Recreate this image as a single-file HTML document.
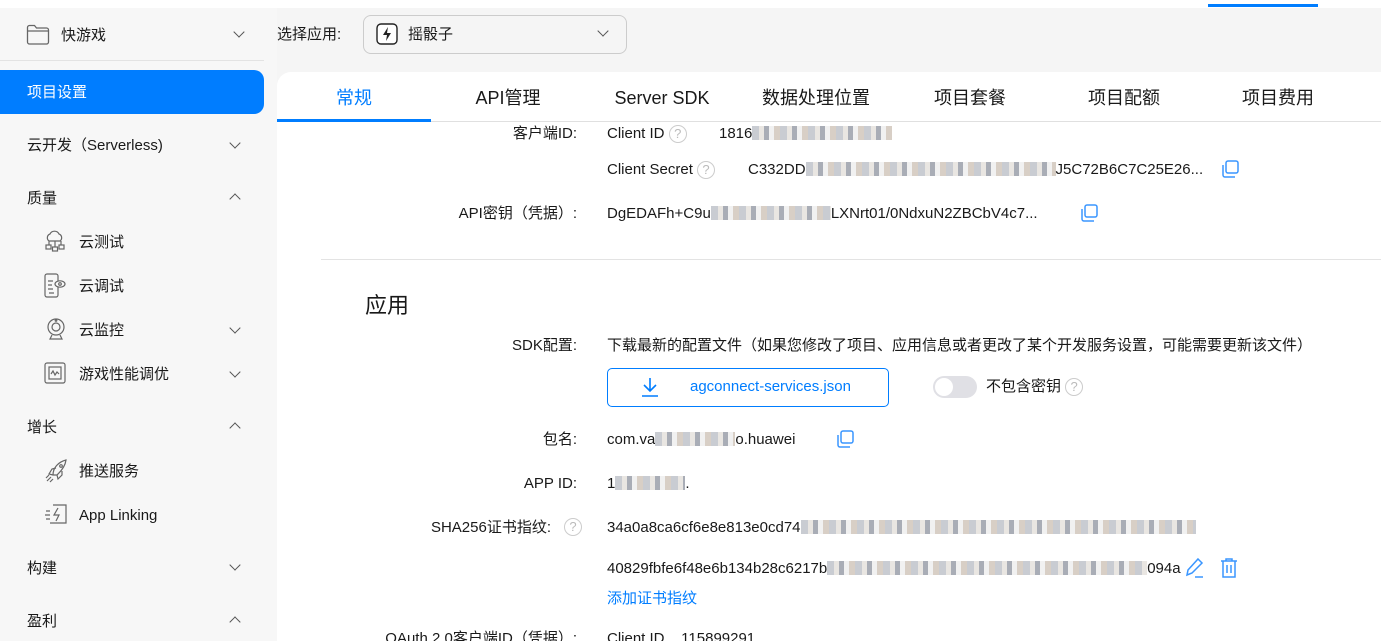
<!DOCTYPE html>
<html><head><meta charset="utf-8"><style>
*{margin:0;padding:0;box-sizing:border-box}
html,body{width:1381px;height:641px;overflow:hidden}
body{background:#f5f5f5;font-family:"Liberation Sans","Noto Sans CJK SC",sans-serif;color:#191919;position:relative;line-height:20px}
.a{position:absolute;white-space:nowrap}
.side{position:absolute;left:0;top:8px;width:277px;height:633px;background:#f7f7f7}
.si{font-size:15px;color:#191919}
.chev{position:absolute;width:8px;height:8px;border-right:1.3px solid #555;border-bottom:1.3px solid #555;transform:rotate(45deg)}
.up{transform:rotate(225deg)}
.card{position:absolute;left:277px;top:72px;width:1104px;height:569px;background:#fff;border-radius:14px 0 0 0}
.tab{position:absolute;top:87px;font-size:18px;line-height:22px;color:#191919;width:154px;text-align:center}
.lbl{position:absolute;font-size:15px;text-align:right;right:804px;white-space:nowrap}
.val{position:absolute;font-size:15px;white-space:nowrap;left:607px}
.q{display:inline-block;width:18px;height:18px;border:1.3px solid #ccc;border-radius:50%;color:#bbb;font-size:13px;text-align:center;line-height:16px;vertical-align:top;margin-top:1px}
.blur{display:inline-block;height:14px;vertical-align:-2px;background:repeating-linear-gradient(90deg,#c9ccd2 0 7px,#e9e6e2 7px 12px,#a9adb6 12px 17px,#f1f1f1 17px 22px,#d8cfc6 22px 28px)}
.cp{position:absolute;width:18px;height:18px}
</style></head><body>
<div class="a" style="left:0;top:0;width:1381px;height:8px;background:#fff"></div>
<div class="a" style="left:1208px;top:4px;width:110px;height:3px;background:#007dff"></div>
<div class="side"></div>
<svg class="a" style="left:26px;top:24px" width="24" height="22" viewBox="0 0 24 22"><path d="M1.5 3.5a2 2 0 0 1 2-2h5l2 2.5h10a2 2 0 0 1 2 2v12a2 2 0 0 1-2 2h-17a2 2 0 0 1-2-2z M1.5 7h21" fill="none" stroke="#666" stroke-width="1.3"/></svg>
<div class="a si" style="left:61px;top:26px">快游戏</div>
<div class="chev" style="left:235px;top:28px"></div>
<div class="a" style="left:0;top:60px;width:264px;height:1px;background:#e3e3e3"></div>
<div class="a" style="left:277px;top:25px;font-size:15px">选择应用:</div>
<div class="a" style="left:363px;top:15px;width:264px;height:39px;border:1px solid #ccc;border-radius:8px;background:#f5f5f5"></div>
<svg class="a" style="left:376px;top:23px" width="22" height="22" viewBox="0 0 22 22"><rect x="1" y="1" width="20" height="20" rx="4" fill="#fff" stroke="#222" stroke-width="1.4"/><path d="M12 4 7 12h4l-1 6 5-8h-4z" fill="#222"/></svg>
<div class="a" style="left:408px;top:25px;font-size:15px">摇骰子</div>
<div class="chev" style="left:599px;top:27px"></div>
<div class="a" style="left:0;top:70px;width:264px;height:44px;background:#007dff;border-radius:0 10px 10px 0"></div>
<div class="a" style="left:27px;top:83px;font-size:15px;color:#fff">项目设置</div>
<div class="a si" style="left:27px;top:136px">云开发（Serverless)</div><div class="chev" style="left:231px;top:139px"></div>
<div class="a si" style="left:27px;top:189px">质量</div><div class="chev up" style="left:231px;top:195px"></div>
<div class="a si" style="left:79px;top:233px">云测试</div>
<div class="a si" style="left:79px;top:277px">云调试</div>
<div class="a si" style="left:79px;top:321px">云监控</div><div class="chev" style="left:231px;top:324px"></div>
<div class="a si" style="left:79px;top:365px">游戏性能调优</div><div class="chev" style="left:231px;top:368px"></div>
<div class="a si" style="left:27px;top:418px">增长</div><div class="chev up" style="left:231px;top:424px"></div>
<div class="a si" style="left:79px;top:462px">推送服务</div>
<div class="a si" style="left:79px;top:506px">App Linking</div>
<div class="a si" style="left:27px;top:559px">构建</div><div class="chev" style="left:231px;top:561px"></div>
<div class="a si" style="left:27px;top:612px">盈利</div><div class="chev up" style="left:231px;top:618px"></div>
<svg class="a" style="left:43px;top:229px" width="24" height="24" viewBox="0 0 24 24" fill="none" stroke="#666" stroke-width="1.2"><path d="M6 12a4 4 0 0 1 1-7 5 5 0 0 1 9 0 4 4 0 0 1 1 7z M12 12v6 M6 12v4 M18 12v4"/><rect x="3" y="16" width="5" height="4"/><rect x="9.5" y="18" width="5" height="4"/><rect x="16" y="16" width="5" height="4"/></svg>
<svg class="a" style="left:43px;top:273px" width="24" height="26" viewBox="0 0 24 26" fill="none" stroke="#666" stroke-width="1.2"><rect x="2" y="1" width="13" height="23" rx="2"/><path d="M5 8h5M5 12h4M5 16h5M6 20h5"/><ellipse cx="17" cy="11" rx="5" ry="3.2" fill="#f7f7f7"/><circle cx="17" cy="11" r="1.3"/></svg>
<svg class="a" style="left:45px;top:317px" width="22" height="24" viewBox="0 0 22 24" fill="none" stroke="#666" stroke-width="1.2"><circle cx="11" cy="10" r="8"/><circle cx="11" cy="10" r="4"/><circle cx="11" cy="3.5" r=".8"/><path d="M7 18l-2 4h12l-2-4"/></svg>
<svg class="a" style="left:44px;top:361px" width="22" height="24" viewBox="0 0 22 24" fill="none" stroke="#666" stroke-width="1.2"><rect x="1" y="2" width="20" height="20" rx="2"/><rect x="5" y="6" width="12" height="12"/><path d="M7 13l2-3 2 4 2-3 2 2"/></svg>
<svg class="a" style="left:44px;top:458px" width="24" height="26" viewBox="0 0 24 26" fill="none" stroke="#666" stroke-width="1.2"><path d="M9 17 C9 10 14 4 22 2 C21 10 15 15 13 17z M9 17l-4-1 3-5 4-1 M13 17l1 4 4-4 0-4 M7 19l-4 4M9 21l-3 3M5 17l-3 3"/><circle cx="17" cy="8" r="1.3"/></svg>
<svg class="a" style="left:44px;top:503px" width="24" height="22" viewBox="0 0 24 22" fill="none" stroke="#666" stroke-width="1.2"><path d="M9 2h13v18H6 M14 5l-4 7h5l-3 6 M2 8h4M1 12h5M2 16h4"/></svg>
<div class="card"></div>
<div class="tab" style="left:277px;color:#007dff">常规</div>
<div class="tab" style="left:431px">API管理</div>
<div class="tab" style="left:585px">Server SDK</div>
<div class="tab" style="left:739px">数据处理位置</div>
<div class="tab" style="left:893px">项目套餐</div>
<div class="tab" style="left:1047px">项目配额</div>
<div class="tab" style="left:1201px">项目费用</div>
<div class="a" style="left:277px;top:121px;width:1104px;height:1px;background:#e0e0e0"></div>
<div class="a" style="left:277px;top:119px;width:154px;height:3px;background:#007dff"></div>
<div class="lbl" style="top:124px">客户端ID:</div>
<div class="val" style="top:124px">Client ID <span class="q">?</span></div>
<div class="val" style="left:719px;top:124px">1816<span class="blur" style="width:140px"></span></div>
<div class="val" style="top:160px">Client Secret <span class="q">?</span></div>
<div class="val" style="left:748px;top:160px">C332DD<span class="blur" style="width:250px"></span>J5C72B6C7C25E26...</div>
<svg class="cp" style="left:1221px;top:160px" viewBox="0 0 18 18" fill="none" stroke="#3a96ff" stroke-width="1.5"><rect x="5" y="1" width="12" height="12" rx="2"/><path d="M2 5v10a2 2 0 0 0 2 2h10"/></svg>
<div class="lbl" style="top:204px">API密钥（凭据）:</div>
<div class="val" style="top:204px">DgEDAFh+C9u<span class="blur" style="width:120px"></span>LXNrt01/0NdxuN2ZBCbV4c7...</div>
<svg class="cp" style="left:1080px;top:204px" viewBox="0 0 18 18" fill="none" stroke="#3a96ff" stroke-width="1.5"><rect x="5" y="1" width="12" height="12" rx="2"/><path d="M2 5v10a2 2 0 0 0 2 2h10"/></svg>
<div class="a" style="left:321px;top:259px;width:1060px;height:1px;background:#e3e3e3"></div>
<div class="a" style="left:365px;top:293px;font-size:22px;line-height:26px">应用</div>
<div class="lbl" style="top:336px">SDK配置:</div>
<div class="val" style="top:336px">下载最新的配置文件（如果您修改了项目、应用信息或者更改了某个开发服务设置，可能需要更新该文件）</div>
<div class="a" style="left:607px;top:368px;width:282px;height:39px;border:1px solid #007dff;border-radius:5px"></div>
<svg class="a" style="left:640px;top:376px" width="20" height="22" viewBox="0 0 20 22" fill="none" stroke="#007dff" stroke-width="1.6"><path d="M10 2v13M4 9l6 6 6-6M2 20h16"/></svg>
<div class="a" style="left:690px;top:377px;font-size:15px;color:#007dff">agconnect-services.json</div>
<div class="a" style="left:933px;top:376px;width:44px;height:22px;border-radius:11px;background:#e0e0e5"></div>
<div class="a" style="left:935px;top:378px;width:18px;height:18px;border-radius:50%;background:#fff"></div>
<div class="a" style="left:986px;top:377px;font-size:15px">不包含密钥 <span class="q">?</span></div>
<div class="lbl" style="top:430px">包名:</div>
<div class="val" style="top:430px">com.va<span class="blur" style="width:80px"></span>o.huawei</div>
<svg class="cp" style="left:836px;top:430px" viewBox="0 0 18 18" fill="none" stroke="#3a96ff" stroke-width="1.5"><rect x="5" y="1" width="12" height="12" rx="2"/><path d="M2 5v10a2 2 0 0 0 2 2h10"/></svg>
<div class="lbl" style="top:474px">APP ID:</div>
<div class="val" style="top:474px">1<span class="blur" style="width:70px"></span>.</div>
<div class="lbl" style="top:518px;right:830px">SHA256证书指纹:</div>
<div class="a" style="left:564px;top:517px"><span class="q">?</span></div>
<div class="val" style="top:518px">34a0a8ca6cf6e8e813e0cd74<span class="blur" style="width:395px"></span></div>
<div class="val" style="top:559px">40829fbfe6f48e6b134b28c6217b<span class="blur" style="width:320px"></span>094a</div>
<svg class="a" style="left:1185px;top:557px" width="20" height="22" viewBox="0 0 20 22" fill="none" stroke="#3a96ff" stroke-width="1.5"><path d="M13 2l4 4-10 10-5 2 1-5z M10 20h8"/></svg>
<svg class="a" style="left:1219px;top:557px" width="20" height="22" viewBox="0 0 20 22" fill="none" stroke="#3a96ff" stroke-width="1.5"><path d="M2 4h16M7 4V2h6v2M4 4v16h12V4M8 8v8M12 8v8"/></svg>
<div class="val" style="top:589px;color:#007dff">添加证书指纹</div>
<div class="lbl" style="top:629px">OAuth 2.0客户端ID（凭据）:</div>
<div class="val" style="top:629px">Client ID &nbsp;&nbsp; 115899291</div>
</body></html>
